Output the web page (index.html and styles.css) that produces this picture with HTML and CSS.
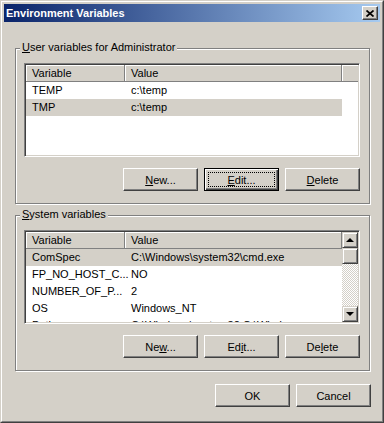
FILE: index.html
```html
<!DOCTYPE html>
<html lang="en">
<head>
    <meta charset="UTF-8">
    <title>Environment Variables</title>
    <link rel="stylesheet" href="styles.css">
</head>
<body>
    <div class="window">
        <div class="window-inner">
            <div class="caption">
                <span class="caption-title">Environment Variables</span>
                <span class="caption-close">
                    <svg width="8" height="7" viewBox="0 0 8 7"><path d="M0.5 0.5 L7.5 6.5 M7.5 0.5 L0.5 6.5" stroke="#000" stroke-width="1.7" fill="none"/></svg>
                </span>
            </div>

            <div class="content">
                <!-- user variables -->
                <div class="group">
                    <span class="group-title"><u>U</u>ser variables for Administrator</span>
                    <div class="list">
                        <div class="list-main">
                            <div class="list-head">
                                <div class="head-cell col-var">Variable</div>
                                <div class="head-cell col-val">Value</div>
                                <div class="head-cell head-fill"></div>
                            </div>
                            <div class="row"><div class="col-var">TEMP</div><div class="col-val">c:\temp</div></div>
                            <div class="row selected"><div class="col-var">TMP</div><div class="col-val">c:\temp</div></div>
                        </div>
                    </div>
                    <div class="buttons">
                        <button class="btn"><u>N</u>ew...</button>
                        <button class="btn default"><u>E</u>dit...</button>
                        <button class="btn"><u>D</u>elete</button>
                    </div>
                </div>

                <!-- system variables -->
                <div class="group group-system">
                    <span class="group-title"><u>S</u>ystem variables</span>
                    <div class="list">
                        <div class="list-main">
                            <div class="list-head">
                                <div class="head-cell col-var">Variable</div>
                                <div class="head-cell col-val">Value</div>
                            </div>
                            <div class="row selected"><div class="col-var">ComSpec</div><div class="col-val">C:\Windows\system32\cmd.exe</div></div>
                            <div class="row"><div class="col-var">FP_NO_HOST_C...</div><div class="col-val">NO</div></div>
                            <div class="row"><div class="col-var">NUMBER_OF_P...</div><div class="col-val">2</div></div>
                            <div class="row"><div class="col-var">OS</div><div class="col-val">Windows_NT</div></div>
                            <div class="row"><div class="col-var">Path</div><div class="col-val">C:\Windows\system32;C:\Windows</div></div>
                        </div>
                        <div class="scrollbar">
                            <span class="sb-btn"><span class="arrow-up"></span></span>
                            <span class="sb-btn sb-thumb"></span>
                            <span class="sb-track"></span>
                            <span class="sb-btn"><span class="arrow-down"></span></span>
                        </div>
                    </div>
                    <div class="buttons">
                        <button class="btn">Ne<u>w</u>...</button>
                        <button class="btn">Ed<u>i</u>t...</button>
                        <button class="btn">De<u>l</u>ete</button>
                    </div>
                </div>

                <div class="footer">
                    <button class="btn">OK</button>
                    <button class="btn">Cancel</button>
                </div>
            </div>
        </div>
    </div>
</body>
</html>
```

FILE: styles.css
```css
body {
    margin: 0;
    font-family: 'Liberation Sans', Arial, sans-serif;
    font-size: 11px;
    color: #000;
}
.window {
    width: 384px;
    height: 423px;
    box-sizing: border-box;
    background-color: #d4d0c8;
    border: 1px solid;
    border-color: #d4d0c8 #404040 #404040 #d4d0c8;
}
.window-inner {
    height: 100%;
    box-sizing: border-box;
    border: 1px solid;
    border-color: #fff #808080 #808080 #fff;
    padding: 2px;
}
.caption {
    height: 18px;
    display: flex;
    align-items: center;
    justify-content: space-between;
    background: linear-gradient(to right, #0a246a, #a6caf0);
    padding: 0 2px 0 2px;
}
.caption-title {
    color: #fff;
    font-weight: bold;
    font-size: 11px;
}
.caption-close {
    width: 16px;
    height: 14px;
    box-sizing: border-box;
    display: flex;
    align-items: center;
    justify-content: center;
    background-color: #d4d0c8;
    border: 1px solid;
    border-color: #fff #404040 #404040 #fff;
    box-shadow: inset -1px -1px #808080;
}
.content {
    padding: 26px 10px 0 11px;
}
.group {
    position: relative;
    border: 1px solid #808080;
    box-shadow: inset 1px 1px #fff, 1px 1px #fff;
    padding: 14px 9px 12px 8px;
}
.group-system {
    margin-top: 11px;
}
.group-title {
    position: absolute;
    top: -8px;
    left: 4px;
    padding: 0 2px;
    line-height: 13px;
    background-color: #d4d0c8;
}
.list {
    height: 94px;
    box-sizing: border-box;
    display: flex;
    background-color: #fff;
    border: 1px solid;
    border-color: #808080 #fff #fff #808080;
    box-shadow: inset 1px 1px #404040, inset -1px -1px #d4d0c8;
    padding: 1px;
    overflow: hidden;
}
.list-main {
    flex: 1;
    overflow: hidden;
}
.list-head {
    display: flex;
    height: 17px;
}
.head-cell {
    box-sizing: border-box;
    height: 17px;
    line-height: 16px;
    background-color: #d4d0c8;
    border-right: 1px solid #808080;
    border-bottom: 1px solid #808080;
    box-shadow: inset 1px 1px #fff;
}
.head-fill {
    flex: 1;
    border-right: none;
}
.col-var {
    width: 99px;
    box-sizing: border-box;
    padding-left: 6px;
    flex: none;
    white-space: nowrap;
}
.col-val {
    width: 217px;
    box-sizing: border-box;
    padding-left: 6px;
    flex: none;
    white-space: nowrap;
    overflow: hidden;
}
.row {
    display: flex;
    width: 316px;
    height: 17px;
    line-height: 17px;
}
.row.selected {
    background-color: #d4d0c8;
}
.scrollbar {
    width: 16px;
    display: flex;
    flex-direction: column;
}
.sb-btn {
    height: 16px;
    box-sizing: border-box;
    display: flex;
    align-items: center;
    justify-content: center;
    background-color: #d4d0c8;
    border: 1px solid;
    border-color: #d4d0c8 #404040 #404040 #d4d0c8;
    box-shadow: inset 1px 1px #fff, inset -1px -1px #808080;
}
.sb-track {
    flex: 1;
    background: repeating-conic-gradient(#fff 0 25%, #d4d0c8 0 50%) 0 0 / 2px 2px;
}
.arrow-up {
    width: 0;
    height: 0;
    border-left: 4px solid transparent;
    border-right: 4px solid transparent;
    border-bottom: 4px solid #000;
}
.arrow-down {
    width: 0;
    height: 0;
    border-left: 4px solid transparent;
    border-right: 4px solid transparent;
    border-top: 4px solid #000;
}
.buttons {
    display: flex;
    justify-content: flex-end;
    gap: 6px;
    margin-top: 11px;
}
.footer {
    display: flex;
    justify-content: flex-end;
    gap: 6px;
    margin-top: 13px;
    margin-right: -1px;
}
.btn {
    position: relative;
    width: 75px;
    height: 23px;
    box-sizing: border-box;
    padding: 0;
    font-family: 'Liberation Sans', Arial, sans-serif;
    font-size: 11px;
    color: #000;
    background-color: #d4d0c8;
    border: 1px solid;
    border-color: #fff #404040 #404040 #fff;
    box-shadow: inset -1px -1px #808080;
}
.btn.default {
    border-color: #000;
    box-shadow: inset 1px 1px #fff, inset -1px -1px #404040, inset -2px -2px #808080;
}
.btn.default::after {
    content: "";
    position: absolute;
    top: 3px;
    left: 3px;
    right: 3px;
    bottom: 3px;
    border: 1px dotted #000;
}
```
